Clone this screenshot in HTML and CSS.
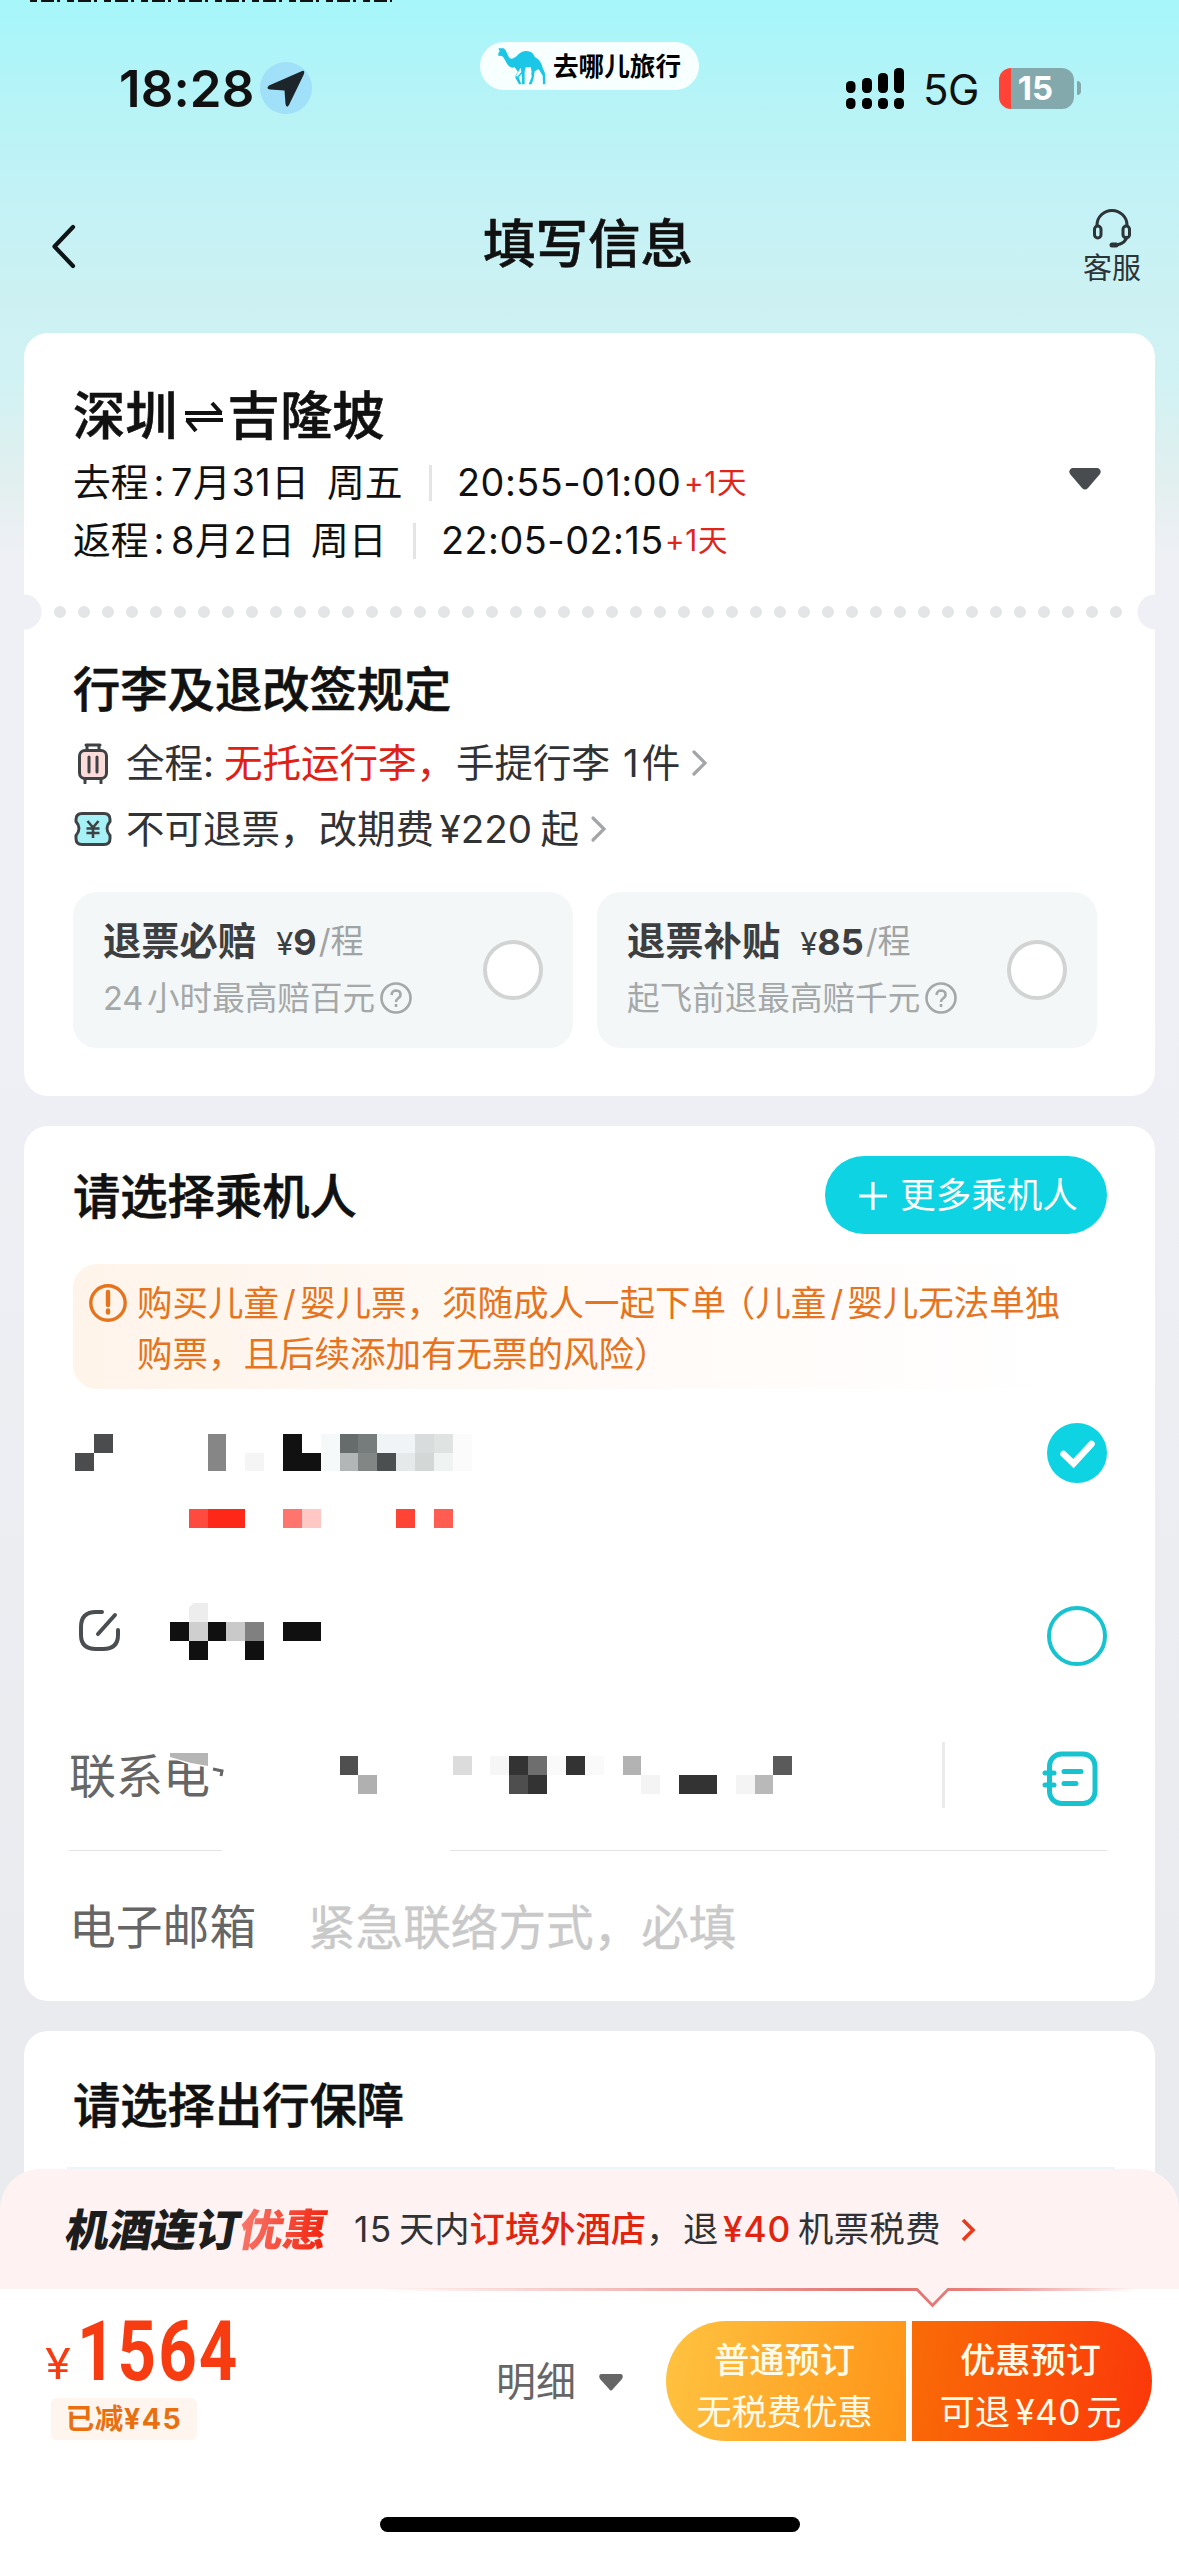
FILE: index.html
```html
<!DOCTYPE html>
<html lang="zh-CN">
<head>
<meta charset="utf-8">
<title>填写信息</title>
<link rel="stylesheet" href="styles.css">
</head>
<body>
<div class="page">
  <div class="clipped-edge"></div>

  <div class="status">
    <span class="time">18:28</span>
    <span class="location">
      <svg width="52" height="52" viewBox="0 0 52 52"><circle cx="26" cy="26" r="26" fill="#a0e0f8"/><path d="M41 9.500Q45 7 44 12L29 43Q26.500 47 25.500 42L24.500 28.500 10 27.500Q5.500 26.500 9 23.500Z" fill="#1c2529"/></svg>
    </span>
    <span class="brand">
      <svg width="50" height="38" viewBox="80 50 150 114"><path fill="#1bc6e6" d="M84 54h16l6 6 9 19q5 10 16 4 8-4 14-12 12-10 22-9 14 0 21 8 4 10 11 14 10 5 14 16 4 14 10 26 3 8 2 36h-7l-1-26-12-20-12 7q-1 20-9 39h-9l9-22-3-28-15-1-3 13v38h-8v-32l-10 11 8 21h-7l-11-20q0-9 8-17l-10-14q-13 4-22-9-6-12-13-23-7-5-14-2v-9l4-5z"/><path d="M151 112l-14 24 4 3 12-14zM168 113l13-3 3 14-7 22z" fill="#f8ffff"/></svg>
      <span>去哪儿旅行</span>
    </span>
    <span class="signal">
      <svg width="60" height="42" viewBox="0 0 60 42"><g fill="#000"><rect x="0" y="14" width="9.500" height="12" rx="4.200"/><rect x="16" y="11" width="10" height="15" rx="4.200"/><rect x="32" y="6" width="10" height="20" rx="4.200"/><rect x="48" y="1" width="10" height="25" rx="4.200"/><rect x="0" y="31" width="9.500" height="11" rx="4.200"/><rect x="16" y="31" width="10" height="11" rx="4.200"/><rect x="32" y="31" width="10" height="11" rx="4.200"/><rect x="48" y="31" width="10" height="11" rx="4.200"/></g></svg>
    </span>
    <span class="network">5G</span>
    <span class="battery">15</span>
    <span class="battery-nub"></span>
  </div>

  <div class="nav">
    <svg class="back" width="26" height="46" viewBox="0 0 26 46"><path d="M22 3 3.500 22.500 22 42" fill="none" stroke="#0f1416" stroke-width="4.200" stroke-linecap="round" stroke-linejoin="round"/></svg>
    <h1>填写信息</h1>
    <div class="service">
      <svg width="40" height="40" viewBox="0 0 40 40" fill="none" stroke="#2b3437" stroke-width="3"><path d="M5 18v-2a15 14.500 0 0 1 30 0v2M35 27q-1 7-10 9"/><rect x="2.500" y="17" width="6.500" height="12" rx="3.200"/><rect x="31" y="17" width="6.500" height="12" rx="3.200"/><path d="M20 36h4" stroke-width="5" stroke-linecap="round"/></svg>
      <span>客服</span>
    </div>
  </div>

  <section class="card trip">
    <div class="trip-head">
      <div class="trip-main">
        <h2 class="route">深圳<svg width="40" height="34" viewBox="0 0 40 34" fill="none" stroke="#111" stroke-width="4"><path d="M1 13h37M28 3l9 10M39 20H2M12 31 3 20"/></svg>吉隆坡</h2>
        <div class="leg"><span class="leg-name">去程<i>:</i></span><span class="date-a">7月31日</span><span class="week">周五</span><b class="bar"></b><span class="hours-a">20:55-01:00</span><em>+1天</em></div>
        <div class="leg"><span class="leg-name">返程<i>:</i></span><span class="date-b">8月2日</span><span class="week">周日</span><b class="bar"></b><span class="hours-b">22:05-02:15</span><em>+1天</em></div>
      </div>
      <svg class="unfold" width="32" height="22" viewBox="0 0 32 22"><path d="M3 0h26q4 2 2 6L19 20q-3 3-6 0L1 6Q-1 2 3 0z" fill="#494c4e"/></svg>
    </div>
    <div class="perforation">
      <svg width="1131" height="36" viewBox="0 0 1131 36"><circle cx="0" cy="18" r="17.500" fill="#eff0f5"/><circle cx="1131" cy="18" r="17.500" fill="#eff0f5"/><path d="M36 18h1058" stroke="#e3e6e6" stroke-width="12" stroke-linecap="round" stroke-dasharray="0 24"/></svg>
    </div>
    <h2 class="section-title">行李及退改签规定</h2>
    <div class="rule">
      <svg class="rule-icon" width="40" height="42" viewBox="0 0 40 42" fill="none" stroke="#3f4244" stroke-width="3"><path d="M14 8V3h12v5M13 3h14M12 37v4M28 37v4" stroke-linecap="round"/><rect x="6.500" y="8.500" width="27" height="28" rx="5.500" fill="#fcdcda"/><path d="M16 15v15M24 15v15" stroke-linecap="round"/></svg>
      <span class="rule-name">全程:</span><span class="alert">无托运行李，</span><span>手提行李</span><span class="count">1件</span>
      <svg class="more" width="18" height="28" viewBox="0 0 18 28"><path d="M3 3l11 11L3 25" fill="none" stroke="#a3a5a6" stroke-width="3.200" stroke-linecap="round"/></svg>
    </div>
    <div class="rule">
      <svg class="rule-icon" width="40" height="36" viewBox="0 0 40 36" fill="#a6f1f6" stroke="#3f4244" stroke-width="3"><path d="M9 2.500h22q6 0 6 6v2q-6 7 0 14v3q0 6-6 6H9q-6 0-6-6v-3q6-7 0-14v-2q0-6 6-6z"/><path d="M14.500 10l5.500 6.500 5.500-6.500M20 17v10M13.500 17.500h13M13.500 22h13" fill="none" stroke-width="2.600"/></svg>
      <span>不可退票，</span><span class="fee-name">改期费</span><span class="fee">¥220</span><span>起</span>
      <svg class="more more-b" width="18" height="28" viewBox="0 0 18 28"><path d="M3 3l11 11L3 25" fill="none" stroke="#a3a5a6" stroke-width="3.200" stroke-linecap="round"/></svg>
    </div>
    <div class="options">
      <div class="option">
        <div>
          <div class="option-title"><strong>退票必赔</strong><i>¥</i><b>9</b><span>/程</span></div>
          <div class="option-sub"><span class="num">24</span>小时最高赔百元<svg width="32" height="32" viewBox="0 0 32 32" fill="none" stroke="#a5a8a8" stroke-width="2.600"><circle cx="16" cy="16" r="14.500"/><path d="M11.500 13q.5-4.500 4.700-4.500 4.300.2 4.300 4 0 2.500-2.500 4-2 1.200-2 3.500M16 22v3"/></svg></div>
        </div>
        <span class="radio"></span>
      </div>
      <div class="option">
        <div>
          <div class="option-title"><strong>退票补贴</strong><i>¥</i><b>85</b><span>/程</span></div>
          <div class="option-sub">起飞前退最高赔千元<svg width="32" height="32" viewBox="0 0 32 32" fill="none" stroke="#a5a8a8" stroke-width="2.600"><circle cx="16" cy="16" r="14.500"/><path d="M11.500 13q.5-4.500 4.700-4.500 4.300.2 4.300 4 0 2.500-2.500 4-2 1.200-2 3.500M16 22v3"/></svg></div>
        </div>
        <span class="radio"></span>
      </div>
    </div>
  </section>

  <section class="card people">
    <div class="people-head">
      <h2 class="section-title">请选择乘机人</h2>
      <div class="add"><svg width="30" height="30" viewBox="0 0 30 30"><path d="M15 1v28M1 15h28" stroke="#fff" stroke-width="3.200"/></svg>更多乘机人</div>
    </div>
    <div class="notice">
      <svg width="40" height="40" viewBox="0 0 40 40" fill="none" stroke="#e6731d"><circle cx="20" cy="20" r="17.200" stroke-width="3.400"/><path d="M20 9v13M20 27.500v2" stroke-width="4.400" stroke-linecap="round"/></svg>
      <p>购买儿童<s>/</s>婴儿票，须随成人一起下单<u>（</u>儿童<s>/</s>婴儿无法单独<br>购票，且后续添加有无票的风险）</p>
    </div>
    <div class="passenger first">
      <svg width="420" height="112" viewBox="73 1423 420 112" shape-rendering="crispEdges">
        <path fill="#4a4c4e" d="M94 1434h19v19H94zM75 1453h19v18H75z"/>
        <path fill="#868686" d="M208 1434h18v37h-18z"/><path fill="#f5f5f5" d="M245 1453h19v18h-19z"/>
        <path fill="#111" d="M283 1434h19v19h19v18h-38z"/><path fill="#f5f9fa" d="M321 1434h19v37h-19z"/>
        <path fill="#666b6c" d="M340 1434h18v19h-18z"/><path fill="#b2b6b6" d="M340 1453h18v18h-18z"/>
        <path fill="#767b7c" d="M358 1434h19v19h-19z"/><path fill="#828684" d="M358 1453h19v18h-19z"/>
        <path fill="#f0f4f6" d="M377 1434h38v19h-38z"/><path fill="#4b4f50" d="M377 1453h19v18h-19z"/><path fill="#e5e9ea" d="M396 1453h19v18h-19z"/>
        <path fill="#d8dcdd" d="M415 1434h19v19h-19z"/><path fill="#d3d7d6" d="M415 1453h19v18h-19z"/>
        <path fill="#dfe3e2" d="M434 1434h19v19h-19z"/><path fill="#eff3f2" d="M434 1453h19v18h-19z"/><path fill="#fbfbfb" d="M453 1434h19v37h-19z"/>
        <path fill="#ff4a3f" d="M189 1509h19v19h-19z"/><path fill="#fe2818" d="M208 1509h37v19h-37z"/><path fill="#ff746c" d="M283 1509h19v19h-19z"/><path fill="#ffc8c5" d="M302 1509h19v19h-19z"/><path fill="#ff4436" d="M396 1509h19v19h-19z"/><path fill="#ff5d52" d="M434 1509h19v19h-19z"/>
      </svg>
      <svg width="60" height="60" viewBox="0 0 60 60"><circle cx="30" cy="30" r="30" fill="#0dd3e3"/><path d="M16.500 31 26.500 40.500 44.500 21" fill="none" stroke="#fff" stroke-width="6.500" stroke-linecap="round"/></svg>
    </div>
    <div class="passenger second">
      <svg width="420" height="60" viewBox="73 1600 420 60">
        <path d="M102 1612h-6q-15 0-15 15v8q0 14 15 14h7q15 0 15-14v-5M98 1634l17-19" fill="none" stroke="#4b4e50" stroke-width="4" stroke-linecap="round"/>
        <g shape-rendering="crispEdges"><path fill="#ededed" d="M189 1607l4-4h15v19h-19z"/><path fill="#cfcfcf" d="M189 1622h19v19h-19z"/><path fill="#c9c9c9" d="M226 1622h19v19h-19z"/><path fill="#808080" d="M245 1622h19v19h-19z"/><path fill="#101010" d="M170 1622h19v19h-19zM208 1622h18v19h-18zM283 1622h38v19h-38zM189 1641h19v19h-19zM245 1641h19v19h-19z"/></g>
      </svg>
      <svg width="60" height="60" viewBox="0 0 60 60"><circle cx="30" cy="30" r="28" fill="none" stroke="#18c3d0" stroke-width="4"/></svg>
    </div>
    <div class="field phone">
      <div class="label">联系电<svg class="mask" width="60" height="50" viewBox="168 1750 60 50"><path fill="#fff" d="M168 1750h60v50h-18v-31l-22-4-20-7z"/><path fill="#b5b5b5" d="M170 1754h38v13l-17-3-21-6z"/><path d="M213 1770l9 2-1 5" fill="none" stroke="#666" stroke-width="3"/></svg></div>
      <svg width="452" height="38" viewBox="340 1754 452 38" shape-rendering="crispEdges">
        <path fill="#4f4f4f" d="M340 1754h18v19h-18z"/><path fill="#b0b0b0" d="M358 1773h19v19h-19z"/><path fill="#dcdcdc" d="M453 1754h19v19h-19z"/><path fill="#f6f6f6" d="M490 1754h19v19h-19z"/>
        <path fill="#333" d="M509 1754h19v19h-19zM528 1773h19v19h-19zM566 1754h19v19h-19zM679 1773h38v19h-38z"/><path fill="#4e4e4e" d="M509 1773h19v19h-19z"/><path fill="#6e6e6e" d="M528 1754h19v19h-19z"/>
        <path fill="#fafafa" d="M547 1754h19v19h-19zM585 1754h19v19h-19z"/><path fill="#b3b3b3" d="M623 1754h18v19h-18z"/><path fill="#f4f4f4" d="M641 1773h19v19h-19zM736 1773h19v19h-19z"/><path fill="#b9b9b9" d="M755 1773h18v19h-18z"/><path fill="#5a5a5a" d="M773 1754h19v19h-19z"/>
      </svg>
      <span class="field-bar"></span>
      <svg class="book" width="56" height="56" viewBox="0 0 56 56" fill="none" stroke="#18c3d0" stroke-width="5" stroke-linecap="round"><rect x="7.500" y="3" width="45.500" height="49.500" rx="12"/><path d="M3 22h9M3 34h9M22 20.500h17M22 32.500h12"/></svg>
    </div>
    <div class="rule-line"></div>
    <div class="field email">
      <div class="label">电子邮箱</div>
      <div class="placeholder">紧急联络方式，必填</div>
    </div>
  </section>

  <section class="card cover">
    <h2 class="section-title">请选择出行保障</h2>
    <div class="blue-line"></div>
  </section>

  <footer>
    <div class="promo">
      <span class="slogan">机酒连订<b>优惠</b></span>
      <span class="n15">15</span><span>天内</span><em>订境外酒店</em><span class="comma">，</span><span class="back-word">退</span><em class="n40">¥40</em><span class="tax">机票税费</span>
      <svg width="20" height="28" viewBox="0 0 20 28"><path d="M4 4l10 10L4 24" fill="none" stroke="#ea3a1c" stroke-width="3.600"/></svg>
      <svg class="pointer" width="780" height="22" viewBox="0 0 780 22"><defs><linearGradient id="edge"><stop offset="0" stop-color="#e87b76" stop-opacity="0"/><stop offset=".65" stop-color="#df706b"/><stop offset=".76" stop-color="#e8807c"/><stop offset=".97" stop-color="#e8807c" stop-opacity="0"/></linearGradient></defs><path d="M538 0h30l-15 17z" fill="#fef2f2"/><path d="M0 1.500h538l15.500 16 15.500-16h211" fill="none" stroke="url(#edge)" stroke-width="2.800"/></svg>
    </div>
    <div class="checkout">
      <div class="price">
        <div class="amount"><span class="yen">¥</span><span class="value">1564</span></div>
        <div class="saved">已减<span>¥45</span></div>
      </div>
      <div class="detail">明细<svg width="24" height="17" viewBox="0 0 24 17"><path d="M2 0h20q3 1 1 5L14 15q-2 3-4 0L1 5Q-1 1 2 0z" fill="#666"/></svg></div>
      <div class="buttons">
        <div class="btn plain"><strong>普通预订</strong><span>无税费优惠</span></div>
        <div class="btn deal"><strong>优惠预订</strong><span>可退<i>¥40</i>元</span></div>
      </div>
    </div>
    <div class="home"></div>
  </footer>
</div>
</body>
</html>
```
FILE: styles.css
```css
* { box-sizing: border-box; }
body { margin: 0; }
.page {
  width: 1179px; height: 2556px; overflow: hidden; position: relative;
  font-family: "Inter", "Noto Sans CJK SC", sans-serif;
  color: #111; line-height: 1; white-space: nowrap;
  background: linear-gradient(180deg, #a6f6fa 0, #b9f3f6 120px, #c2f2f6 190px, #cdf1f3 300px, #d1f2f4 380px, #e2efef 480px, #eff0f5 560px, #eff0f5 1000px, #e9ebef 2000px, #e9ebef 100%);
}
h1, h2, p { margin: 0; font-weight: 500; }
h1, h2 { -webkit-text-stroke: 0.6px currentColor; }
i, em { font-style: normal; }
svg { display: block; flex: none; }
span { flex: none; }

.clipped-edge {
  position: absolute; left: 30px; top: 0; width: 362px; height: 2px;
  background: repeating-linear-gradient(90deg, #111 0 7px, transparent 7px 11px, #111 11px 24px, transparent 24px 27px, #111 27px 30px, transparent 30px 37px);
}
.status { height: 176px; display: flex; align-items: center; padding-left: 119px; }
.time { width: 141px; font-size: 51px; font-weight: 600; letter-spacing: 0.1px; }
.location { width: 52px; }
.brand {
  align-self: flex-start; margin: 42px 147px 0 168px; width: 219px; height: 48px; border-radius: 24px;
  background: #f8ffff; display: flex; align-items: center; padding-left: 17px; gap: 6px;
  font-size: 25.6px; font-weight: 700; color: #000;
}
.brand span { padding-top: 2px; }
.signal { width: 77px; }
.network { width: 76px; font-size: 42px; padding-top: 3px; letter-spacing: -0.5px; }
.battery {
  width: 75px; height: 41px; border-radius: 12px; font-size: 33px; font-weight: 700; color: #fff;
  display: flex; align-items: center; justify-content: center; padding-right: 2px;
  background: linear-gradient(90deg, #ff4336 12px, #83a9ac 12px);
}
.battery-nub { width: 4px; height: 14px; margin-left: 3px; border-radius: 0 6px 6px 0; background: #83a9ac; }

.nav { height: 134px; display: flex; align-items: center; justify-content: space-between; padding: 0 36px 0 51px; }
.back { margin: 8px 62px 0 0; }
.nav h1 { font-size: 52.5px; margin-left: -44px; padding-top: 3px; }
.service { display: flex; flex-direction: column; align-items: center; gap: 5px; font-size: 29px; color: #2b3437; width: 62px; padding-top: 5px; }

.card { margin: 0 24px 30px; border-radius: 24px; background: #fff; padding: 0 48px 0 49px; }
.trip { margin-top: 23px; height: 763px; padding-top: 51px; }
.trip-head { display: flex; align-items: center; justify-content: space-between; padding-right: 6px; }
.route { display: flex; align-items: center; height: 60px; margin-bottom: 10px; font-size: 52.300px; padding-top: 4px; }
.route svg { margin: 2px 4px 0 6px; }
.unfold { margin-top: 4px; }
.leg { height: 58px; display: flex; align-items: center; font-size: 37.8px; }
.leg-name { width: 98px; }
.leg-name i { margin-left: 5px; }
.date-a { width: 156px; letter-spacing: 0.6px; }
.date-b { width: 140px; letter-spacing: 0.6px; }
.week { width: 102px; }
.bar { width: 3px; height: 36px; background: #e2e4e5; margin-right: 25px; }
.hours-a { width: 227px; letter-spacing: 0.500px; }
.hours-b { width: 224px; letter-spacing: 0.500px; }
.leg em { font-size: 29.500px; color: #e1251b; letter-spacing: 0.8px; }
.perforation { margin: 24px -48px 29px -49px; height: 36px; }
.section-title { height: 60px; line-height: 60px; font-size: 47.3px; }
.trip .section-title { margin-bottom: 11px; padding-top: 1px; }
.rule { height: 66px; display: flex; align-items: center; font-size: 38.500px; color: #303234; }
.rule-icon { margin-right: 13px; }
.rule-name { width: 98px; }
.alert { color: #e02014; width: 232px; }
.count { margin-left: 13px; letter-spacing: 3px; }
.more { margin-left: 8px; }
.fee-name { width: 121px; }
.fee { width: 101px; }
.more-b { margin-left: 11px; }
.options { display: flex; gap: 24px; margin-top: 30px; }
.option { width: 500px; height: 156px; border-radius: 24px; background: #f4f7f7; display: flex; justify-content: space-between; align-items: center; padding: 0 30px; }
.option-title { display: flex; align-items: center; height: 50px; font-size: 38.300px; color: #3c3e3f; padding-top: 1px; }
.option-title strong { font-weight: 700; margin-right: 20px; }
.option-title i { font-size: 31px; padding-top: 3px; }
.option-title b { font-weight: 700; font-size: 36px; }
.option-title span { font-size: 33px; color: #a0a3a3; margin-left: 2px; }
.option-sub { display: flex; align-items: center; height: 64px; font-size: 32.600px; color: #a5a8a8; margin-bottom: -6px; }
.option-sub .num { width: 44px; }
.option-sub svg { margin-left: 5px; }
.radio { width: 60px; height: 60px; border-radius: 50%; border: 4px solid #d2d4d4; background: #fff; }

.people { height: 875px; }
.people-head { height: 138px; display: flex; align-items: center; justify-content: space-between; }
.people-head .section-title { padding-top: 2px; }
.add { width: 282px; height: 78px; border-radius: 39px; background: #0dd3e3; color: #fff; display: flex; align-items: center; justify-content: center; gap: 12px; font-size: 35.500px; padding: 1px 0 0 4px; }
.notice { height: 125px; border-radius: 24px; background: linear-gradient(90deg, #fef4ea, #fffaf7 50%, #fff 95%); display: flex; padding: 14px 0 0 15px; color: #e6731d; font-size: 35.500px; }
.notice svg { margin: 5px 9px 0 0; }
.notice p { font-weight: 400; line-height: 51px; }
.notice s { text-decoration: none; display: inline-block; width: 21px; text-align: center; }
.notice u { text-decoration: none; margin-left: 11.500px; font-feature-settings: "halt"; }
.passenger { display: flex; justify-content: space-between; align-items: flex-start; }
.first { height: 176px; padding-top: 34px; }
.second { height: 135px; padding-top: 35px; }
.second svg:last-child { margin-top: 6px; }
.field { height: 150px; display: flex; align-items: center; font-size: 47px; color: #666; }
.phone { margin-left: -4px; }
.phone .label { width: 271px; position: relative; }
.mask { position: absolute; left: 99px; top: -3px; }
.field-bar { width: 3px; height: 66px; background: #ebebeb; margin: 0 97px 0 150px; }
.book { margin-top: 8px; }
.rule-line { height: 1px; margin-left: -4px; background: linear-gradient(90deg, #e4e4e4 153px, transparent 153px 381px, #e4e4e4 381px); }
.email { padding-top: 3px; margin-left: -4px; }
.email .label { width: 239px; font-size: 46.800px; }
.placeholder { color: #c9c9c9; font-size: 47.600px; -webkit-text-stroke: 0.4px #c9c9c9; }

.cover { height: 178px; padding-top: 45px; margin-bottom: 0; }
.blue-line { height: 3px; margin: 31px -8px 0 -6px; background: #eaf6fa; }

footer { position: relative; margin-top: -40px; height: 387px; background: linear-gradient(180deg, transparent 60px, #fff 60px); }
.promo { position: relative; height: 120px; border-radius: 40px 40px 0 0; background: #fef2f2; display: flex; align-items: center; padding: 2px 0 0 66px; font-size: 35.300px; color: #303234; }
.slogan { font-size: 44px; font-weight: 900; width: 288px; transform: skewX(-10deg); letter-spacing: -0.500px; color: #1d1d1d; }
.slogan b { font-weight: 900; background: linear-gradient(90deg, #f9776c, #f2230c); background-clip: text; -webkit-background-clip: text; color: transparent; }
.n15 { width: 45px; letter-spacing: 1.500px; }
.promo em { color: #e1230f; font-weight: 500; }
.comma { width: 37px; }
.back-word { width: 40px; }
.promo .n40 { width: 75px; letter-spacing: 0.8px; }
.tax { letter-spacing: 0.4px; }
.promo > svg:nth-of-type(1) { margin-left: 18px; }
.pointer { position: absolute; left: 379px; top: 119px; }
.checkout { display: flex; height: 228px; }
.price { width: 450px; padding: 24px 0 0 45px; }
.amount { display: flex; align-items: center; height: 78px; color: #f83c12; }
.yen { font-size: 42px; width: 32px; margin-top: 23px; transform: scaleX(1.12); transform-origin: left; }
.value { font: 700 83px/78px Roboto, sans-serif; letter-spacing: 2.500px; transform: scaleX(.81); transform-origin: left; }
.saved { margin: 7px 0 0 6px; width: 146px; height: 42px; border-radius: 6px; background: #fdf5ee; color: #e87010; font-size: 28.500px; font-weight: 700; display: flex; align-items: center; justify-content: center; letter-spacing: 0.700px; }
.saved span { letter-spacing: 1.500px; }
.detail { width: 216px; padding-left: 46px; height: 186px; display: flex; align-items: center; font-size: 40px; color: #666; }
.detail svg { margin-left: 23px; }
.buttons { display: flex; gap: 6px; padding-top: 32px; }
.btn { width: 240px; height: 120px; display: flex; flex-direction: column; align-items: center; padding: 14px 3px 0 0; color: #fffbe8; font-size: 35.300px; line-height: 52px; }
.btn strong { font-weight: 500; }
.btn i { margin: 0 5px; letter-spacing: 0.500px; }
.plain { border-radius: 60px 0 0 60px; background: linear-gradient(100deg, #ffc341, #fe9317); }
.deal { border-radius: 0 60px 60px 0; background: linear-gradient(100deg, #f96c07, #fb370a); }
.home { width: 420px; height: 15px; border-radius: 8px; background: #000; margin: 0 0 0 380px; }
```
